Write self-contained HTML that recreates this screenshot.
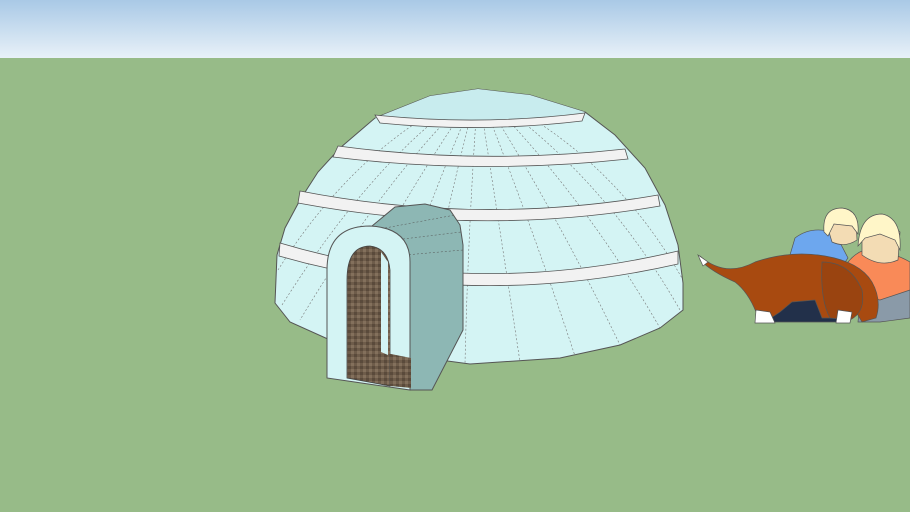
<!DOCTYPE html>
<html><head><style>
html,body{margin:0;padding:0;width:910px;height:512px;overflow:hidden;background:#97bb88}
svg{display:block}
</style></head><body>
<svg width="910" height="512" viewBox="0 0 910 512" xmlns="http://www.w3.org/2000/svg">
<defs>
<linearGradient id="sky" x1="0" y1="0" x2="0" y2="1">
<stop offset="0" stop-color="#a9c9e6"/><stop offset="1" stop-color="#e8f1f8"/>
</linearGradient>
<pattern id="brick" width="6" height="6" patternUnits="userSpaceOnUse">
<rect width="6" height="6" fill="#6e5c4a"/><rect x="0" y="0" width="3" height="3" fill="#5a4a3b"/><rect x="3" y="3" width="3" height="3" fill="#83705c"/>
</pattern>
<clipPath id="dome"><polygon points="275,303 277,255 285,228 300,200 318,172 340,148 375,118 430,96 478,89 530,95 585,112 615,135 645,168 665,205 678,245 683,283 683,310 660,328 620,345 560,358 470,364 380,352 330,340 290,322"/></clipPath>
</defs>
<rect x="0" y="0" width="910" height="58" fill="url(#sky)"/>
<rect x="0" y="58" width="910" height="454" fill="#97bb88"/>

<polygon points="275,303 277,255 285,228 300,200 318,172 340,148 375,118 430,96 478,89 530,95 585,112 615,135 645,168 665,205 678,245 683,283 683,310 660,328 620,345 560,358 470,364 380,352 330,340 290,322" fill="#d4f4f4" stroke="#555" stroke-width="1"/>
<g clip-path="url(#dome)" stroke="#777" stroke-width="0.6" stroke-dasharray="2,2" fill="none">
<path d="M478,89 Q380,150 282,305"/><path d="M478,89 Q390,170 300,320"/><path d="M478,89 Q400,200 330,338"/>
<path d="M478,89 Q420,220 380,352"/><path d="M478,89 Q440,230 420,358"/><path d="M478,89 Q468,230 465,364"/>
<path d="M478,89 Q500,230 520,362"/><path d="M478,89 Q530,220 575,356"/><path d="M478,89 Q555,210 620,345"/>
<path d="M478,89 Q580,190 660,328"/><path d="M478,89 Q600,170 680,310"/><path d="M478,89 Q360,140 278,270"/>
<path d="M478,89 Q610,150 683,280"/>
</g>
<polygon points="375,118 430,96 478,89 530,95 585,112 560,120 480,122 400,121" fill="#c8ecee"/>
<g fill="#f2f2f2" stroke="#555" stroke-width="0.8">
<path d="M375,115 Q480,126 585,113 L582,121 Q480,133 380,123 Z"/>
<path d="M338,146 Q480,165 625,149 L628,159 Q480,175 333,157 Z"/>
<path d="M300,191 Q480,226 658,195 L660,206 Q480,237 298,203 Z"/>
<path d="M280,243 Q470,300 678,251 L678,264 Q470,311 279,256 Z"/>
</g>

<polygon points="372,226 395,207 425,204 450,210 460,225 463,245 463,330 432,390 410,390 410,262" fill="#8db7b4" stroke="#555" stroke-width="1"/>
<g stroke="#555" stroke-width="0.5" stroke-dasharray="2,2" fill="none">
<path d="M385,228 L455,215"/><path d="M395,240 L461,232"/><path d="M405,255 L463,250"/>
</g>
<path d="M327,378 L327,270 Q327,226 370,226 Q410,228 410,262 L410,390 Z" fill="#d4f4f4" stroke="#555" stroke-width="1"/>
<path d="M347,378 L347,280 Q347,246 370,246 Q388,248 390,270 L390,386 Z" fill="url(#brick)" stroke="#444" stroke-width="0.8"/>
<polygon points="381,250 390,270 390,386 411,388 411,358 381,352" fill="url(#brick)"/>
<polygon points="381,252 388,262 388,355 381,352" fill="#d4f4f4"/>

<g stroke="#555" stroke-width="0.7">
<!-- right person -->
<path d="M860,300 L880,290 L905,285 L910,285 L910,318 L880,322 L858,322 Z" fill="#8a9aa8"/>
<path d="M848,262 Q862,245 880,250 Q900,256 910,262 L910,290 L880,300 L860,296 Z" fill="#f98a58"/>
<!-- left person -->
<path d="M795,238 Q812,225 835,233 L848,258 L825,290 L798,290 L782,282 Z" fill="#6da7ee"/>
<path d="M770,305 L800,294 L840,300 L842,322 L772,322 Z" fill="#22304a"/>
<!-- dog -->
<path d="M700,256 Q725,278 755,262 Q790,250 825,256 Q860,262 872,282 Q882,300 876,318 L862,322 L852,305 L842,318 L822,318 L815,300 L792,302 L780,312 L768,320 L756,312 Q748,292 735,282 Q712,272 700,260 Z" fill="#a84a10"/>
<path d="M822,262 Q850,262 862,290 Q866,312 850,320 L830,318 Q820,300 822,262 Z" fill="#9a4410"/>
<path d="M698,255 L708,262 L703,266 Z" fill="#fff"/>
<path d="M756,310 L770,312 L775,323 L755,323 Z" fill="#fff"/>
<path d="M838,310 L852,312 L850,323 L836,323 Z" fill="#fff"/>
<!-- heads -->
<path d="M826,222 Q840,205 856,220 L857,240 Q845,248 832,242 Z" fill="#f3dcb4"/>
<path d="M824,232 Q822,208 842,208 Q860,210 858,234 L852,226 L834,224 L828,236 Z" fill="#fff6c8"/>
<path d="M862,235 Q880,212 900,232 L898,260 Q880,268 862,255 Z" fill="#f3dcb4"/>
<path d="M858,246 Q860,214 882,214 Q902,218 900,250 L895,240 L880,234 L865,238 Z" fill="#fff6c8"/>
</g>
</svg>
</body></html>
